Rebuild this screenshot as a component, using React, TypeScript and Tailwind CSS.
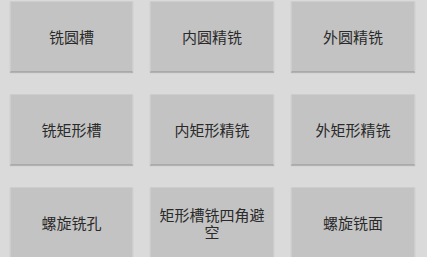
const items = [
  "铣圆槽",
  "内圆精铣",
  "外圆精铣",
  "铣矩形槽",
  "内矩形精铣",
  "外矩形精铣",
  "螺旋铣孔",
  "矩形槽铣四角避空",
  "螺旋铣面",
];

export default function App() {
  return (
    <div
      className="w-[427px] h-[257px] overflow-hidden bg-[#dadada] pt-px pl-[10px]"
      style={{ fontFamily: '"Noto Sans CJK SC", "Noto Sans", sans-serif' }}
    >
      <div className="grid grid-cols-[123px_124px_124px] gap-x-[17px] gap-y-[22px]">
        {items.map((label) => (
          <button
            key={label}
            className="h-[71px] px-[8px] flex items-center justify-center text-center bg-[#c3c3c3] border border-[#cdcdcd] border-b-[#a9a9a9] shadow-[0_1px_1px_rgba(0,0,0,0.18)] text-[15px] leading-[17px] text-[#2a2a2a]"
          >
            {label}
          </button>
        ))}
      </div>
    </div>
  );
}
